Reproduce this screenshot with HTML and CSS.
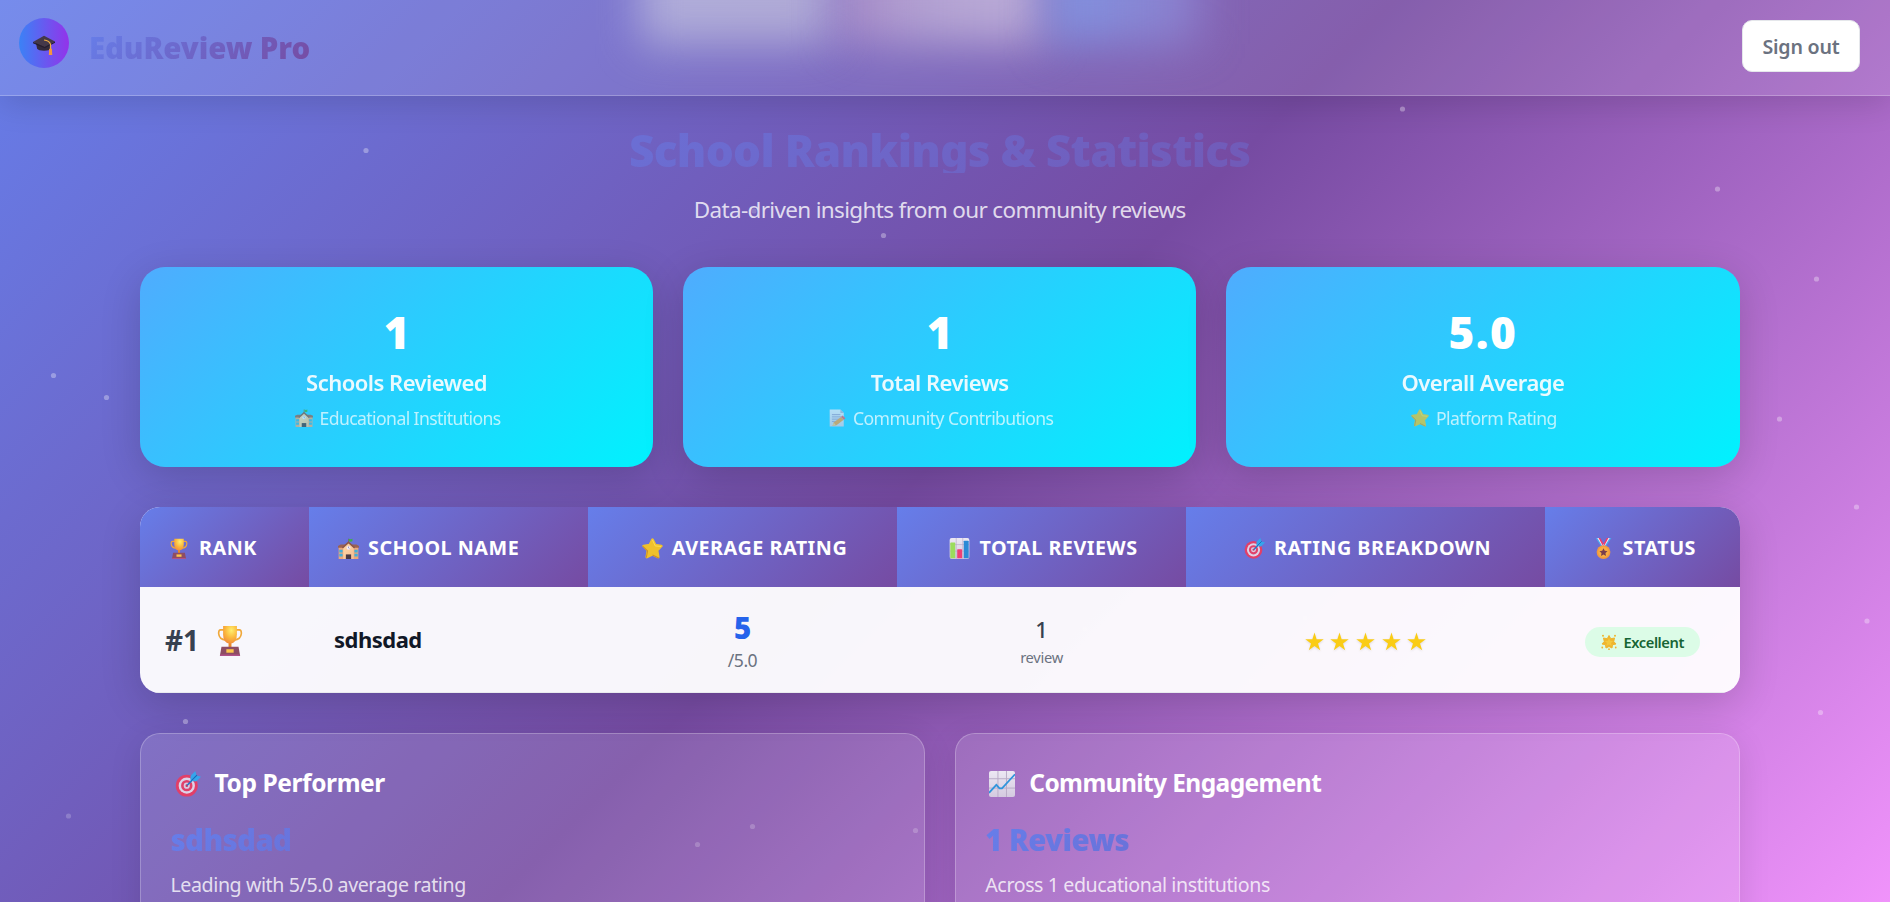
FILE: index.html
```html
<!DOCTYPE html>
<html lang="en">
<head>
<meta charset="utf-8">
<title>EduReview Pro – School Rankings</title>
<link rel="stylesheet" href="styles.css">
</head>
<body>
<svg class="defs" aria-hidden="true">
  <defs>
    <radialGradient id="gold" cx=".6" cy=".25" r=".8"><stop offset="0" stop-color="#ffef6e"/><stop offset=".55" stop-color="#fbb83c"/><stop offset="1" stop-color="#f08a3c"/></radialGradient>
    <linearGradient id="paper" x1="0" y1="0" x2="0" y2="1"><stop offset="0" stop-color="#ece8f3"/><stop offset="1" stop-color="#d4cae0"/></linearGradient>
    <linearGradient id="wall" x1="0" y1="0" x2="1" y2="1"><stop offset="0" stop-color="#ffd9a8"/><stop offset="1" stop-color="#f5bd92"/></linearGradient>
    <symbol id="trophy" viewBox="0 0 32 32" preserveAspectRatio="none">
      <path d="M9 5H4.500Q2 5 2 8.500Q2.500 15 11 15.500M23 5h4.500Q30 5 30 8.500Q29.500 15 21 15.500" fill="none" stroke="#f0a83a" stroke-width="2"/>
      <path d="M14.200 17h3.600v6h-3.600z" fill="#e98a2c"/>
      <path d="M7.500 1h17v8.500q0 9.500-8.500 9.500t-8.500-9.500z" fill="url(#gold)"/>
      <path d="M5.500 22.500h21l2 9.500h-25z" fill="#8e4d63"/><path d="M4 30.500h24l.3 1.500h-24.600z" fill="#b0528a"/>
      <rect x="11.500" y="25" width="9" height="3.600" fill="#fdc64c"/>
    </symbol>
    <symbol id="school" viewBox="0 0 32 32">
      <path d="M15.500 1h1v8h-1z" fill="#7b5a55"/><path d="M16.500 1q3 1.500 5.500 0v4q-2.500 1.500-5.500 0z" fill="#3fae4c"/>
      <path d="M1 13h30v19H1z" fill="#eca679"/><path d="M0 12l4-2h24l4 2v3H0z" fill="#9a6253"/>
      <path d="M8 14l8-7 8 7v18H8z" fill="url(#wall)"/><path d="M16 5l10 9-1.500 2L16 8.500 7.500 16 6 14z" fill="#8d5749"/>
      <circle cx="16" cy="15" r="3" fill="#f4eefa"/><path d="M16 13v2l1.500 1" stroke="#7469a0" fill="none"/>
      <path d="M2 18h5v4H2zm0 6h5v4H2zM25 18h5v4h-5zm0 6h5v4h-5z" fill="#3fb0dc"/>
      <path d="M12 25h8v7h-8z" fill="#4b3a44"/>
    </symbol>
    <symbol id="memo" viewBox="0 0 32 32">
      <path d="M3 1h19l6 6v24H3z" fill="url(#paper)"/><path d="M22 1v6h6z" fill="#b9aed0"/>
      <path d="M7 10h15M7 14h17M7 18h14M7 22h9" stroke="#9b8fc0" stroke-width="1.500"/>
      <path d="M8 30l2-6 13-10 5 5-13 10z" fill="#f79b43"/><path d="M23 14l3-2.500 5 5-3 2.500z" fill="#ee5a6a"/><path d="M8 30l2-6 4 5z" fill="#f4c38c"/>
    </symbol>
    <symbol id="star" viewBox="0 0 32 32">
      <path d="M16 2.500l4.300 8.200 9.200 1.400-6.500 6.800 1.700 10.100L16 25l-8.700 4L9 18.900l-6.500-6.800 9.200-1.400z" fill="#efc12c" stroke="#efc12c" stroke-width="4" stroke-linejoin="round"/>
      <path d="M1 12.500l7.500 7L6.500 30M16 25.800l9.500 4.700" fill="none" stroke="#cf8f25" stroke-width="1.600" stroke-linejoin="round"/>
      <path d="M16 3l4 9 9 1" fill="none" stroke="#f9dc51" stroke-width="1.500"/>
    </symbol>
    <symbol id="bars" viewBox="0 0 32 32">
      <rect x="1" y="0" width="30" height="32" rx="3" fill="url(#paper)"/><path d="M1 10h30M1 20h30M11 0v32M21 0v32" stroke="#b7a9c8"/>
      <rect x="2" y="7" width="7.500" height="24" rx="1" fill="#9bdc5c"/><rect x="12.500" y="17" width="7.500" height="14" rx="1" fill="#ef3f74"/><rect x="22.500" y="4" width="7.500" height="27" rx="1" fill="#2b8ad6"/>
    </symbol>
    <symbol id="target" viewBox="0 0 32 32">
      <circle cx="14.500" cy="18" r="13.500" fill="#e23f68"/><circle cx="14.500" cy="18" r="10" fill="#ddd3e8"/><circle cx="14.500" cy="18" r="7" fill="#e0426a"/><circle cx="14.500" cy="18" r="3.800" fill="#d9cde2"/><circle cx="14.500" cy="18" r="1.600" fill="#c83a63"/>
      <path d="M15 17.500L25 7.500" stroke="#2678c8" stroke-width="2"/><path d="M19 12V6l6-6 1.500 5.500L32 7l-6 6z" fill="#35a5ec"/><path d="M20 12L27 5" stroke="#1766b4" stroke-width="1.300"/>
    </symbol>
    <symbol id="medal" viewBox="0 0 32 32">
      <path d="M4 0h6l9 14h-6zM28 0h-6l-9 14h6z" fill="#4aa6ee"/><path d="M6.500 0h3l8 13h-3zM25.500 0h-3l-8 13h3z" fill="#f4e9f5"/><path d="M8.500 0H11l7 12-2 2zM23.500 0H21l-7 12 2 2z" fill="#ed3a6c"/>
      <circle cx="16" cy="21.500" r="10.500" fill="#f39a3d"/><circle cx="16" cy="21.500" r="8" fill="#f7ad44"/>
      <path d="M16 15.500l1.900 4 4.300.5-3.200 3 .8 4.300-3.800-2.100-3.800 2.100.8-4.300-3.200-3 4.300-.5z" fill="#7a3f4c"/>
    </symbol>
    <symbol id="glow" viewBox="0 0 32 32">
      <path d="M16 3l3.500 6.500L27 8l-1.500 7 4.500 5-7 1.500L22 28l-6-3-6 3-1-6.500L2 20l4.500-5L5 8l7.500 1.500z" fill="#efb52f" stroke="#efb52f" stroke-width="2" stroke-linejoin="round"/>
      <path d="M16 8l2.500 5.500 6 .5-4.500 4 1.500 6-5.500-3-5.500 3 1.500-6-4.500-4 6-.5z" fill="#f3c83f"/>
      <g fill="#efb52f"><circle cx="4" cy="3.500" r="2"/><circle cx="28" cy="3.500" r="2"/><circle cx="2.500" cy="27" r="1.800"/><circle cx="29.500" cy="27" r="1.800"/><circle cx="16" cy="30.500" r="1.800"/></g>
    </symbol>
    <symbol id="trend" viewBox="0 0 32 32" preserveAspectRatio="none">
      <rect width="32" height="32" rx="2.500" fill="url(#paper)"/><path d="M0 9.500h32M0 21h32M11 0v32M21.500 0v32" stroke="#b9acc6" stroke-width="1.200"/>
      <path d="M0 27l9-10 4 4.500h3L32 4" fill="none" stroke="#2f95dc" stroke-width="2.200"/>
    </symbol>
    <symbol id="cap" viewBox="0 0 32 32" preserveAspectRatio="none">
      <path d="M4 11h22v10q-2 4-10 4T6 22z" fill="#332a3b"/><path d="M16 1l16 9.500L17 19 0 11z" fill="#443849"/><path d="M0 11l17 8 15-8.500v2L17 21 0 13z" fill="#251d2e"/>
      <path d="M16 8q8 1 9.500 7v10" fill="none" stroke="#f0ac42" stroke-width="1.800"/><path d="M23.500 22h4l.5 10h-5z" fill="#f5953d"/>
    </symbol>
    <symbol id="rate" viewBox="0 0 20 20"><path d="M10 .5l2.250 7.100H19.700l-6 4.400 2.300 7.100-6-4.400-6 4.400L6.300 12l-6-4.400h7.450z" fill="#facc15"/></symbol>
  </defs>
</svg>
<div class="page">
  <header class="topbar">
    <div class="hero-glow"><i class="glow-a"></i><i class="glow-b"></i><i class="glow-c"></i></div>
    <div class="brand">
      <span class="logo"><svg><use href="#cap"/></svg></span>
      <span class="brand-name">EduReview Pro</span>
    </div>
    <button class="signout">Sign out</button>
  </header>

  <main class="content">
    <h1 class="title">School Rankings &amp; Statistics</h1>
    <p class="subtitle">Data-driven insights from our community reviews</p>

    <section class="stats">
      <article class="stat"><div class="stat-num">1</div><div class="stat-label">Schools Reviewed</div><div class="stat-sub"><svg class="ico-s"><use href="#school"/></svg><span>Educational Institutions</span></div></article>
      <article class="stat"><div class="stat-num">1</div><div class="stat-label">Total Reviews</div><div class="stat-sub"><svg class="ico-s"><use href="#memo"/></svg><span>Community Contributions</span></div></article>
      <article class="stat"><div class="stat-num wide">5.0</div><div class="stat-label">Overall Average</div><div class="stat-sub"><svg class="ico-s"><use href="#star"/></svg><span>Platform Rating</span></div></article>
    </section>

    <section class="table">
      <div class="row head">
        <div class="th left"><svg class="ico-m slim"><use href="#trophy"/></svg>RANK</div>
        <div class="th left"><svg class="ico-m"><use href="#school"/></svg>SCHOOL NAME</div>
        <div class="th"><svg class="ico-m"><use href="#star"/></svg>AVERAGE RATING</div>
        <div class="th"><svg class="ico-m"><use href="#bars"/></svg>TOTAL REVIEWS</div>
        <div class="th"><svg class="ico-m"><use href="#target"/></svg>RATING BREAKDOWN</div>
        <div class="th"><svg class="ico-m"><use href="#medal"/></svg>STATUS</div>
      </div>
      <div class="row body">
        <div class="td rank">#1<svg class="cup"><use href="#trophy"/></svg></div>
        <div class="td name">sdhsdad</div>
        <div class="td stack avg"><b>5</b><span>/5.0</span></div>
        <div class="td stack count"><b>1</b><span>review</span></div>
        <div class="td stars"><svg><use href="#rate"/></svg><svg><use href="#rate"/></svg><svg><use href="#rate"/></svg><svg><use href="#rate"/></svg><svg><use href="#rate"/></svg></div>
        <div class="td status"><span class="badge"><svg><use href="#glow"/></svg>Excellent</span></div>
      </div>
    </section>

    <section class="insights">
      <article class="glass"><h2 class="loose"><svg class="ico-l"><use href="#target"/></svg>Top Performer</h2><div class="value">sdhsdad</div><p>Leading with 5/5.0 average rating</p></article>
      <article class="glass"><h2><svg class="ico-l"><use href="#trend"/></svg>Community Engagement</h2><div class="value">1 Reviews</div><p>Across 1 educational institutions</p></article>
    </section>
  </main>

  <svg class="particles" viewBox="0 0 1890 902">
    <g fill="#fff" fill-opacity=".32">
      <circle cx="366" cy="150.500" r="2.600"/><circle cx="1402.500" cy="109" r="2.600"/><circle cx="1717.500" cy="189" r="2.600"/><circle cx="1816.500" cy="279" r="2.600"/><circle cx="883.500" cy="235.500" r="2.600"/><circle cx="53.500" cy="375.500" r="2.600"/><circle cx="106.500" cy="397.500" r="2.600"/><circle cx="1779.500" cy="419" r="2.600"/><circle cx="1856.500" cy="507" r="2.600"/><circle cx="1867" cy="621" r="2.600"/><circle cx="185.500" cy="721.500" r="2.600"/><circle cx="1820.500" cy="712.500" r="2.600"/>
    </g>
    <g fill="#fff" fill-opacity=".2">
      <circle cx="68.500" cy="816" r="2.600"/><circle cx="697.500" cy="844.500" r="2.600"/><circle cx="752.500" cy="826.500" r="2.600"/><circle cx="915.500" cy="830.500" r="2.600"/><circle cx="754" cy="211" r="2.600"/><circle cx="1085" cy="629" r="2.600"/><circle cx="1305" cy="618" r="2.600"/><circle cx="1251" cy="681" r="2.600"/>
    </g>
  </svg>
</div>
</body>
</html>
```
FILE: styles.css
```css
* { box-sizing: border-box; }
html { background: #fff; }
body { margin: 0; height: 902px; overflow: hidden; font-family: "Noto Sans", "Open Sans", sans-serif; }
h1, h2, p { margin: 0; }
svg { display: block; flex: none; }
.defs { position: absolute; width: 0; height: 0; }

.page {
  position: relative;
  width: 1890px;
  height: 902px;
  overflow: hidden;
  background: linear-gradient(135deg, #667eea 0%, #764ba2 50%, #f093fb 100%);
}
.particles { position: absolute; inset: 0; width: 1890px; height: 902px; pointer-events: none; }

/* Top bar */
.topbar {
  position: relative;
  display: flex;
  justify-content: space-between;
  align-items: flex-start;
  height: 96px;
  padding: 18px 30px 0 19px;
  background: rgba(255, 255, 255, .11);
  border-bottom: 1px solid rgba(255, 255, 255, .24);
  box-shadow: 0 8px 32px rgba(0, 0, 0, .13);
}
.hero-glow { position: absolute; inset: 0; overflow: hidden; }
.hero-glow i { position: absolute; top: -50px; height: 94px; filter: blur(22px); }
.glow-a { left: 640px; width: 190px; background: rgba(215, 215, 226, .56); }
.glow-b { left: 840px; width: 204px; background: linear-gradient(90deg, rgba(225, 175, 200, .4), rgba(218, 200, 222, .55) 35%, rgba(218, 206, 228, .62) 70%); }
.glow-c { left: 1050px; width: 150px; background: linear-gradient(90deg, rgba(128, 155, 232, .85), rgba(150, 150, 225, .5)); }
.brand { position: relative; display: flex; gap: 20px; }
.logo {
  display: flex;
  align-items: center;
  justify-content: center;
  width: 50px;
  height: 50px;
  border-radius: 50%;
  background: linear-gradient(90deg, #3b82f6, #9333ea);
}
.logo svg { width: 22px; height: 20px; margin-top: 4px; }
.brand-name {
  margin-top: 9.600px;
  height: 40px;
  font-size: 29.400px;
  line-height: 40px;
  font-weight: 900;
  letter-spacing: -.080px;
  background: linear-gradient(135deg, #667eea, #764ba2);
  background-clip: text;
  -webkit-background-clip: text;
  color: transparent;
}
.signout {
  position: relative;
  width: 118px;
  height: 52px;
  margin-top: 2px;
  padding: 1px 0 0;
  border: 1px solid #e5e7eb;
  border-radius: 10px;
  background: #fff;
  color: #6b7280;
  font: 560 19.600px "Noto Sans", sans-serif;
  letter-spacing: -.2px;
}

/* Heading */
.content { width: 1599.500px; margin-left: 140px; padding-top: 28px; }
.title {
  height: 48.500px;
  padding-top: 1.500px;
  font-size: 44.100px;
  line-height: 48px;
  font-weight: 900;
  letter-spacing: -.72px;
  text-align: center;
  background: linear-gradient(135deg, #667eea, #764ba2);
  background-clip: text;
  -webkit-background-clip: text;
  color: transparent;
}
.subtitle {
  margin: 20px 0 40.500px;
  font-size: 22.500px;
  line-height: 34px;
  letter-spacing: -.66px;
  text-align: center;
  color: rgba(255, 255, 255, .8);
}

/* Stat cards */
.stats { display: grid; grid-template-columns: repeat(3, 1fr); gap: 30px; }
.stat {
  height: 200px;
  padding-top: 40px;
  border-radius: 25px;
  background: linear-gradient(135deg, #4facfe 0%, #00f2fe 100%);
  box-shadow: 0 10px 40px rgba(0, 0, 0, .16);
  text-align: center;
  color: #fff;
}
.stat-num { font-size: 44.100px; line-height: 50px; font-weight: 900; }
.stat-num.wide { letter-spacing: 1.500px; }
.stat-label { margin-top: 8px; font-size: 22px; line-height: 34px; font-weight: 600; letter-spacing: -.52px; opacity: .9; }
.stat-sub {
  display: flex;
  justify-content: center;
  gap: 7px;
  margin-top: 5px;
  padding-left: 2px;
  font-size: 17.600px;
  line-height: 28px;
  letter-spacing: -.6px;
  opacity: .7;
}
.ico-s { width: 18px; height: 18px; margin-top: 5px; }

/* Rankings table */
.table {
  margin-top: 40px;
  border-radius: 20px;
  overflow: hidden;
  background: rgba(255, 255, 255, .95);
  box-shadow: 0 10px 40px rgba(0, 0, 0, .16);
}
.row { display: grid; grid-template-columns: 169px 279px 309px 289px 359px 1fr; }
.th {
  display: flex;
  align-items: center;
  justify-content: center;
  height: 80px;
  padding-left: 4px;
  background: linear-gradient(135deg, #667eea, #764ba2);
  color: #fff;
  font-size: 19.800px;
  font-weight: 750;
  letter-spacing: .5px;
}
.th.left { justify-content: flex-start; padding-left: 29px; }
.ico-m { width: 21px; height: 21px; margin: 2px 9px 0 0; }
.ico-m.slim { width: 18px; margin: 2px 11px 0 1px; }
.row.body { height: 106px; border-bottom: 1px solid rgba(229, 231, 235, .8); }
.td { display: flex; align-items: center; justify-content: center; }
.rank { justify-content: flex-start; padding-left: 25px; color: #374151; font-size: 28px; font-weight: 700; }
.cup { width: 26px; height: 31px; margin: 1px 0 0 18px; }
.name { justify-content: flex-start; padding: 0 0 2px 25px; color: #111827; font-size: 22px; font-weight: 700; letter-spacing: -.5px; }
.stack { flex-direction: column; }
.avg { padding-top: 5px; }
.avg b { color: #2563eb; font-size: 29.400px; line-height: 34px; font-weight: 900; }
.avg span { margin-top: 2px; color: #6b7280; font-size: 17.600px; line-height: 26px; letter-spacing: -.5px; }
.count { padding-top: 3px; }
.count b { color: #374151; font-size: 22px; line-height: 30px; font-weight: 500; }
.count span { margin-top: 2px; color: #6b7280; font-size: 14.700px; line-height: 22px; letter-spacing: -.3px; }
.stars { gap: 6.700px; padding-top: 3px; }
.stars svg { width: 19px; height: 19px; filter: drop-shadow(0 1px 1px rgba(0, 0, 0, .12)); }
.badge {
  display: flex;
  align-items: center;
  justify-content: center;
  gap: 7px;
  width: 115px;
  height: 30px;
  margin-top: 4px;
  border-radius: 15px;
  background: #dcfce7;
  color: #166534;
  font-size: 14.700px;
  font-weight: 600;
  letter-spacing: -.45px;
}
.badge svg { width: 16px; height: 16px; }

/* Insight cards */
.insights { display: grid; grid-template-columns: 1fr 1fr; gap: 30px; margin-top: 40px; }
.glass {
  height: 210px;
  padding: 30px 29.500px;
  border: 1px solid rgba(255, 255, 255, .24);
  border-radius: 20px;
  background: rgba(255, 255, 255, .12);
  box-shadow: 0 8px 32px rgba(0, 0, 0, .1);
}
.glass h2 { display: flex; align-items: center; color: #fff; font-size: 24.500px; line-height: 37px; font-weight: 700; letter-spacing: -.6px; }
.glass h2.loose { letter-spacing: -.4px; }
.ico-l { width: 26px; height: 26px; margin: 2px 14px 0 4px; }
.value {
  height: 40px;
  margin-top: 19px;
  font-size: 29.400px;
  line-height: 40px;
  font-weight: 900;
  letter-spacing: -.6px;
  background: linear-gradient(135deg, #667eea, #764ba2);
  background-clip: text;
  -webkit-background-clip: text;
  color: transparent;
}
.glass p { margin-top: 10px; color: rgba(255, 255, 255, .8); font-size: 19.600px; line-height: 30px; letter-spacing: -.4px; }
```
